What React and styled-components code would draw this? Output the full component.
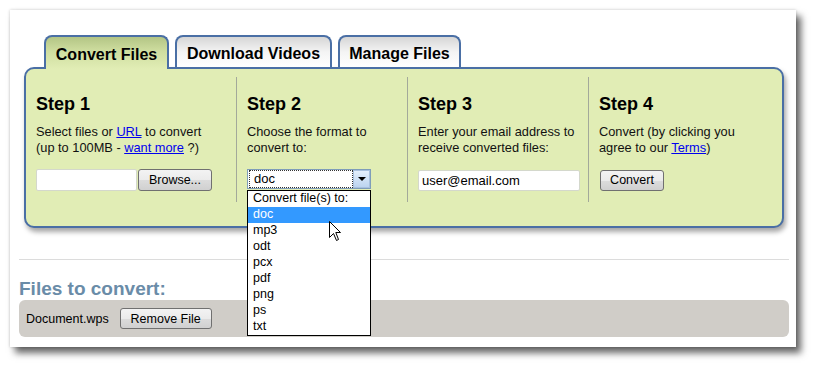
import React from 'react';
import styled, { createGlobalStyle } from 'styled-components';

const GlobalStyle = createGlobalStyle`
  body {
    margin: 0;
    background: #fff;
    font-family: "Liberation Sans", Arial, sans-serif;
    color: #000;
  }
`;

const Page = styled.div`
  padding: 10px 0 20px 10px;
`;

const Card = styled.div`
  position: relative;
  width: 786px;
  height: 337px;
  box-sizing: border-box;
  padding: 25px 7px 10px 9px;
  background: #fff;
  box-shadow: 5px 6px 7px rgba(0, 0, 0, 0.6), 0 0 3px rgba(0, 0, 0, 0.2);
`;

const TabRow = styled.div`
  display: flex;
  align-items: flex-start;
  gap: 6px;
  height: 32px;
  margin-left: 25px;
  position: relative;
  z-index: 2;
`;

const Tab = styled.div`
  box-sizing: border-box;
  width: ${p => p.$w}px;
  height: ${p => (p.$active ? 34 : 32)}px;
  padding-top: ${p => (p.$active ? 3 : 4)}px;
  border: 2px solid #4a6fa5;
  border-bottom: none;
  border-radius: 8px 8px 0 0;
  display: flex;
  align-items: center;
  justify-content: center;
  font-size: 16px;
  font-weight: bold;
  color: #000;
  background: ${p =>
    p.$active
      ? 'linear-gradient(#b3c585 0%, #cfdea0 45%, #e1edb5 100%)'
      : 'linear-gradient(#d6d6d6 0%, #f4f4f4 50%, #fff 100%)'};
`;

const Panel = styled.div`
  margin: 0 5px;
  height: 161px;
  box-sizing: border-box;
  padding: 8px 0 24px;
  border: 2px solid #4a6fa5;
  border-radius: 10px;
  background: #e1edb5;
  box-shadow: 2px 4px 5px rgba(0, 0, 0, 0.35);
  display: grid;
  grid-template-columns: 211px 171px 181px 1fr;
  position: relative;
  z-index: 1;
`;

const Step = styled.div`
  box-sizing: border-box;
  height: 125px;
  padding: 16px 8px 0 10px;
  border-right: ${p => (p.$last ? 'none' : '1px solid #a3a99a')};
`;

const StepTitle = styled.h2`
  margin: 0 0 9px;
  font-size: 18px;
  line-height: 22px;
  font-weight: bold;
`;

const StepText = styled.p`
  margin: 0 0 13px;
  font-size: 12.8px;
  line-height: 16px;
  color: #111;
  white-space: nowrap;
`;

const Link = styled.a`
  color: #0000ee;
  text-decoration: underline;
`;

const Controls = styled.div`
  display: flex;
  align-items: center;
  height: 22px;
`;

const TextBox = styled.div`
  box-sizing: border-box;
  width: ${p => p.$w}px;
  height: ${p => p.$h}px;
  border: 1px solid #d4d8cc;
  border-radius: 2px;
  background: #fff;
  font-size: 13px;
  display: flex;
  align-items: center;
  padding-left: 3px;
`;

const Button = styled.button`
  box-sizing: border-box;
  width: ${p => p.$w}px;
  height: ${p => p.$h || 21}px;
  margin-left: ${p => p.$ml || 0}px;
  padding: 0;
  border: 1px solid #707070;
  border-radius: 3px;
  background: linear-gradient(#f3f3f3 0%, #ebebeb 50%, #dcdcdc 51%, #d0d0d0 100%);
  font-family: "Liberation Sans", Arial, sans-serif;
  font-size: 12.5px;
  color: #000;
`;

const SelectWrap = styled.div`
  position: relative;
  width: 124px;
  height: 20px;
  margin-top: -2px;
`;

const SelectBox = styled.div`
  box-sizing: border-box;
  height: 20px;
  border: 1px solid #7f9db9;
  background: #fff;
  display: flex;
  padding: 0 0 0 1px;
`;

const SelectValue = styled.div`
  flex: 1;
  box-sizing: border-box;
  height: 18px;
  border: 1px dotted #333;
  font-size: 13px;
  line-height: 16px;
  padding-left: 4px;
`;

const SelectArrow = styled.div`
  width: 17px;
  height: 18px;
  box-sizing: border-box;
  border: 1px solid #a7c0de;
  background: linear-gradient(#e3effc, #bcd4f0);
  display: flex;
  align-items: center;
  justify-content: center;
  &::after {
    content: '';
    border-left: 4px solid transparent;
    border-right: 4px solid transparent;
    border-top: 4px solid #000;
  }
`;

const OptionList = styled.ul`
  position: absolute;
  top: 21px;
  left: 0;
  width: 124px;
  box-sizing: border-box;
  margin: 0;
  padding: 0;
  list-style: none;
  border: 1px solid #000;
  background: #fff;
  z-index: 5;
`;

const Option = styled.li`
  height: 16px;
  line-height: 15px;
  padding-left: 5px;
  font-size: 12.5px;
  color: ${p => (p.$selected ? '#fff' : '#000')};
  background: ${p => (p.$selected ? '#3399ff' : 'transparent')};
`;

const Cursor = styled.svg`
  position: absolute;
  left: 81px;
  top: 30px;
`;

const Divider = styled.hr`
  margin: 31px 0 0;
  border: none;
  border-top: 1px solid #dcdcdc;
`;

const FilesTitle = styled.h3`
  margin: 18px 0 0;
  font-size: 19px;
  line-height: 22px;
  font-weight: bold;
  color: #6a8ca8;
`;

const FileBar = styled.div`
  height: 37px;
  border-radius: 6px;
  background: #d0cdc8;
  display: flex;
  align-items: center;
  padding-left: 7px;
  font-size: 12.5px;
`;

const options = ['doc', 'mp3', 'odt', 'pcx', 'pdf', 'png', 'ps', 'txt'];

export default function App() {
  return (
    <Page>
      <GlobalStyle />
      <Card>
        <TabRow>
          <Tab $active $w={125}>Convert Files</Tab>
          <Tab $w={157}>Download Videos</Tab>
          <Tab $w={123}>Manage Files</Tab>
        </TabRow>
        <Panel>
          <Step>
            <StepTitle>Step 1</StepTitle>
            <StepText>
              Select files or <Link href="#">URL</Link> to convert
              <br />
              (up to 100MB - <Link href="#">want more</Link> ?)
            </StepText>
            <Controls>
              <TextBox $w={101} $h={22} />
              <Button $w={74} $h={22} $ml={1}>Browse...</Button>
            </Controls>
          </Step>
          <Step>
            <StepTitle>Step 2</StepTitle>
            <StepText>
              Choose the format to
              <br />
              convert to:
            </StepText>
            <Controls>
              <SelectWrap>
                <SelectBox>
                  <SelectValue>doc</SelectValue>
                  <SelectArrow />
                </SelectBox>
                <OptionList>
                  <Option>Convert file(s) to:</Option>
                  {options.map(o => (
                    <Option key={o} $selected={o === 'doc'}>{o}</Option>
                  ))}
                  <Cursor width="13" height="21" viewBox="0 0 13 21">
                    <path d="M0.5 0.5 L0.5 16.5 L4.5 12.5 L7.5 19.5 L9.5 18.5 L6.8 11.5 L11.5 11.5 Z" fill="#fff" stroke="#000" strokeWidth="1" strokeLinejoin="round" />
                  </Cursor>
                </OptionList>
              </SelectWrap>
            </Controls>
          </Step>
          <Step>
            <StepTitle>Step 3</StepTitle>
            <StepText>
              Enter your email address to
              <br />
              receive converted files:
            </StepText>
            <Controls>
              <TextBox $w={162} $h={21}>user@email.com</TextBox>
            </Controls>
          </Step>
          <Step $last>
            <StepTitle>Step 4</StepTitle>
            <StepText>
              Convert (by clicking you
              <br />
              agree to our <Link href="#">Terms</Link>)
            </StepText>
            <Controls>
              <Button $w={64} $ml={1}>Convert</Button>
            </Controls>
          </Step>
        </Panel>
        <Divider />
        <FilesTitle>Files to convert:</FilesTitle>
        <FileBar>
          Document.wps
          <Button $w={92} $ml={11}>Remove File</Button>
        </FileBar>
      </Card>
    </Page>
  );
}
